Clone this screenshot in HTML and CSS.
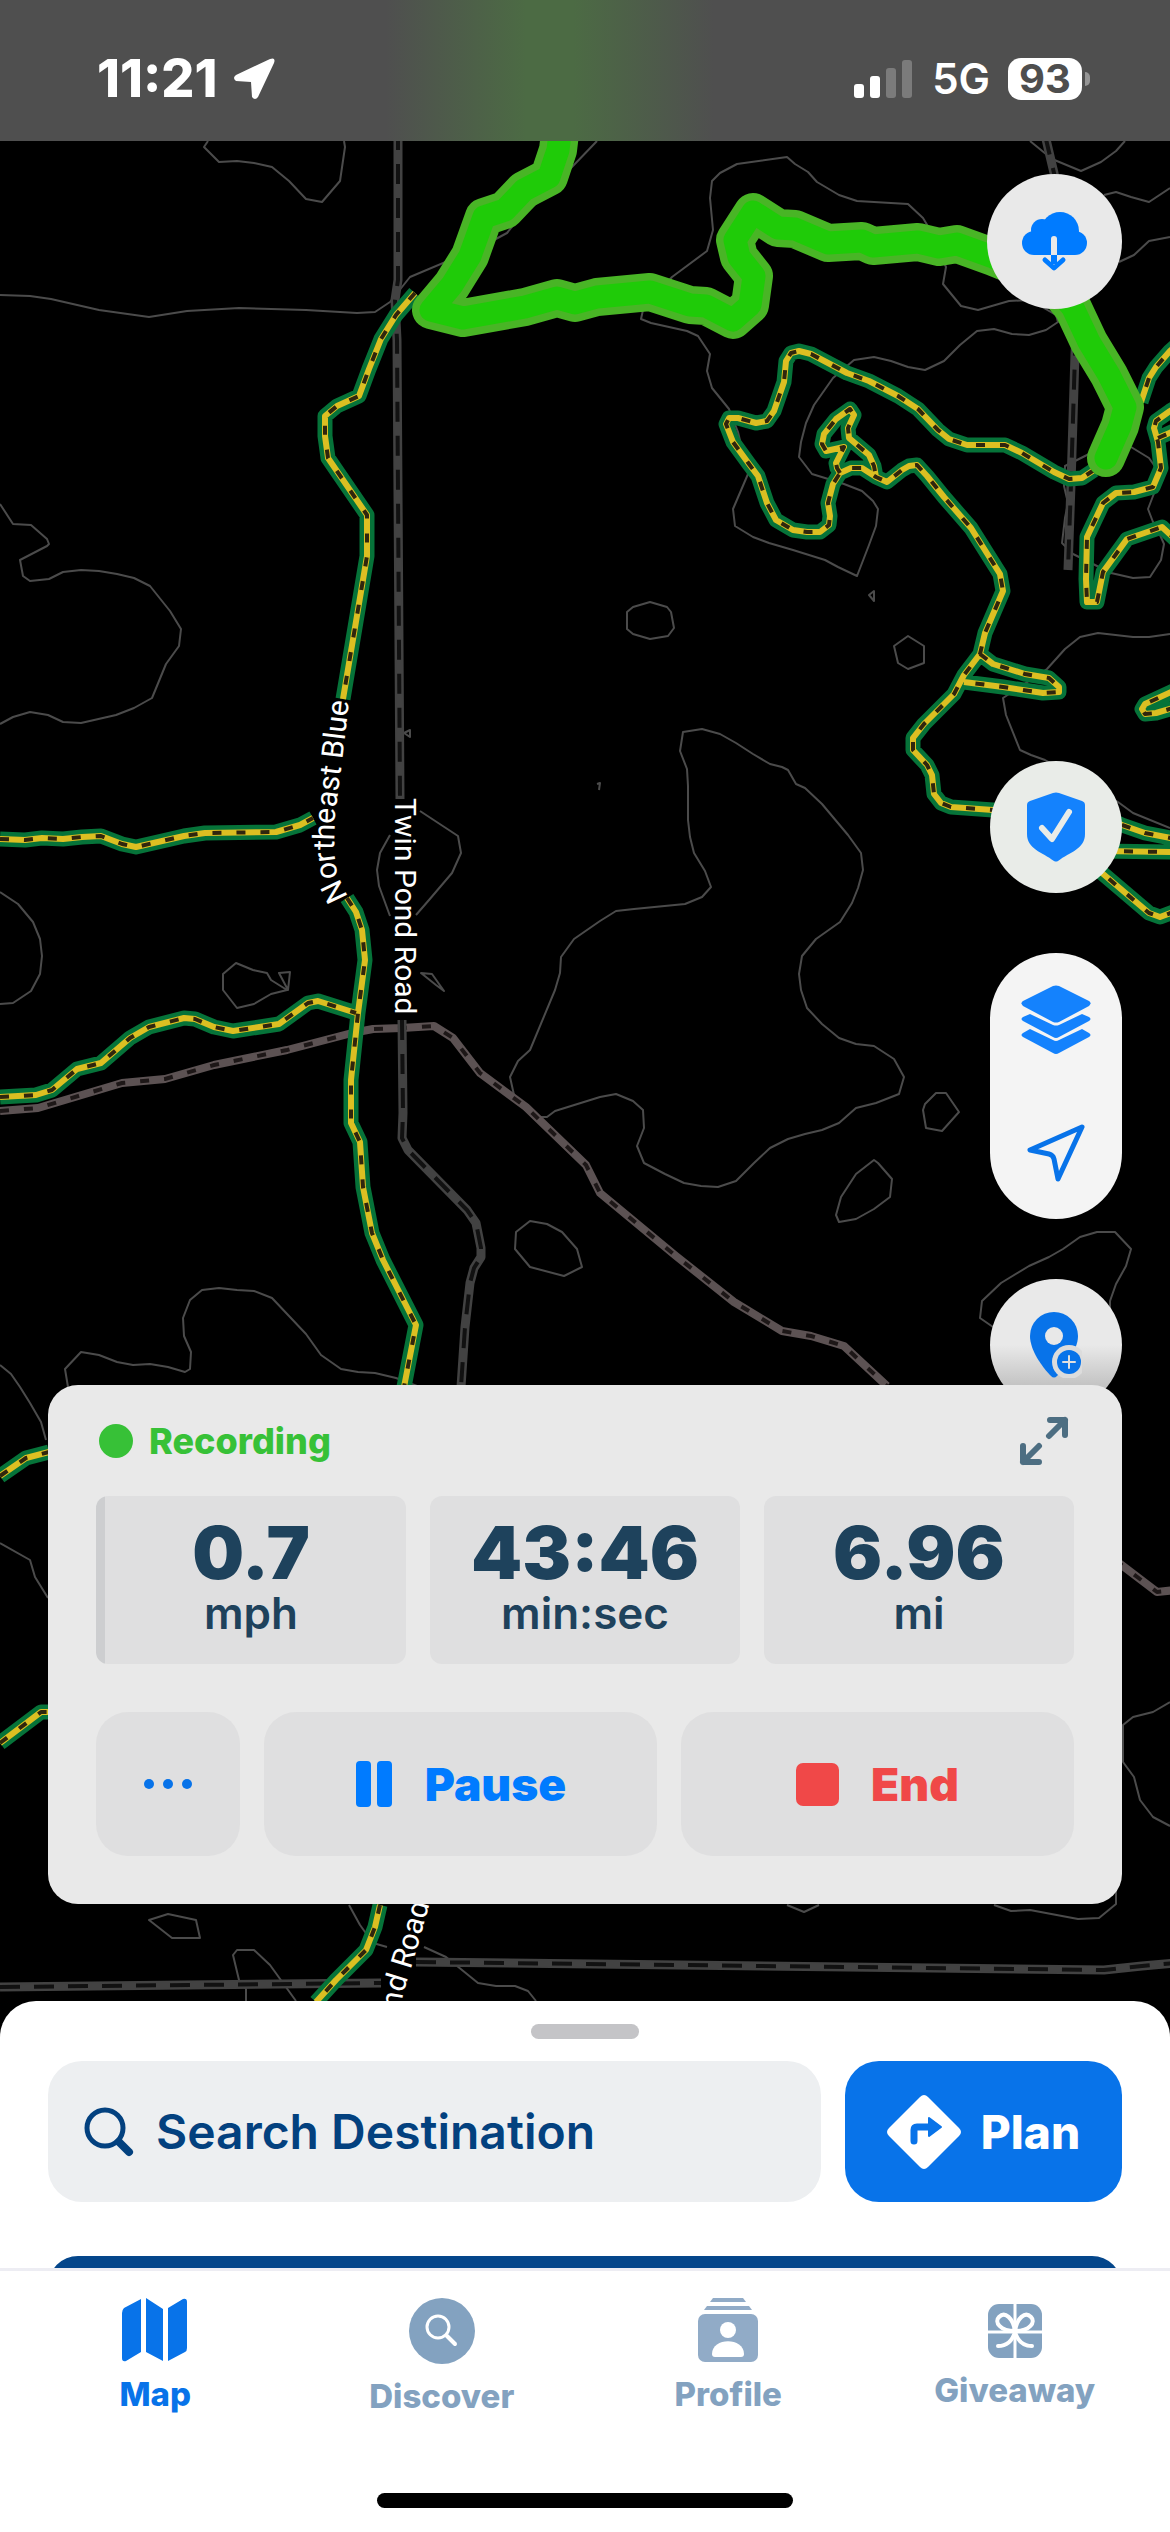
FILE: index.html
```html
<!DOCTYPE html>
<html lang="en">
  <head>
    <meta charset="UTF-8" />
    <meta name="viewport" content="width=device-width, initial-scale=1" />
    <title>Trail Map</title>
    <link rel="stylesheet" href="styles.css">
  </head>
  <body>
    <div class="screen">
      <!-- map canvas -->
      <svg class="map" viewBox="0 0 1170 2532" preserveAspectRatio="xMidYMin slice" aria-hidden="true">
        <defs>
          <path id="trails" d="M415 293L396 315L381 339L369 369L359 396L337 406L325 416V436L328 458L367 515V556L343 699
            M347 898L356 912L362 930L365 960L358 1013L351 1080V1123L360 1142L363 1187L372 1233L383 1260L416 1325L404 1387
            M380 1905L375 1927L366 1950L336 1980L316 2002
            M0 839L25 840L42 838L63 839L82 837L101 836L122 844L136 847L184 836L205 833L276 832L300 825L313 818
            M0 1097L36 1095L52 1090L77 1069L101 1063L130 1038L149 1027L184 1018L195 1019L214 1027L233 1031L279 1024L308 1003L318 1001L356 1013
            M0 1476L26 1458L49 1452
            M0 1743L41 1712H60
            M1094 470L1082 478L1069 479L1054 472L1022 453L1005 445H967L949 439L938 430L918 409L898 396L869 381L847 373L811 354L799 351L791 353L786 361L784 382L774 411L767 421L756 423L738 418H729L726 424L733 442L749 464L758 476L767 503L776 520L793 530L807 532H820L829 525L830 516L828 503L833 484L840 473L851 468H862L876 477L887 482L902 470L909 466L917 465L927 476L944 497L971 528L1000 574L1003 591L985 633L980 654L964 675L954 694L924 724L913 738V750L927 765L932 775L934 794L941 803L951 807L993 810H1020
            M840 473L837 468L836 463L844 447L826 451L822 444L824 434L836 419L850 409L854 415L848 428L849 438L869 455L874 466L876 477
            M980 654L993 664L1025 674L1049 678L1059 687V692L1043 693L1003 687L964 682
            M1180 688L1145 704L1142 709L1145 714L1156 713L1180 706
            M1180 342L1170 351L1156 367L1149 378L1141 402
            M1180 405L1170 411L1156 421L1154 428L1158 442L1161 468L1153 487L1134 492L1116 493L1103 503L1087 537L1086 579L1087 602H1097L1103 572L1127 539L1162 527L1176 540
            M1158 438L1176 430
            M1100 815L1122 825L1145 833L1176 839
            M1100 851L1176 852
            M1090 864L1102 873L1149 913L1160 917L1176 911" />
          <path id="roads" d="M398 130V280L395 300L397 340L400 799
            M402 1020L403 1113L402 1138L408 1150L467 1210L476 1223L481 1248V1257L474 1268L470 1283L465 1327L461 1387
            M1045 135L1054 173L1078 300L1075 354L1071 484L1068 570
            M0 1987L381 1983M416 1962L679 1965L1104 1970L1142 1966L1176 1963" />
          <path id="tracks" d="M0 1111L38 1108L122 1083L165 1079L214 1065L287 1050L352 1033L373 1029L402 1028L434 1026L453 1038L480 1073L526 1107L586 1165L600 1193L676 1256L734 1302L782 1331L811 1336L844 1346L887 1386
            M1115 1560L1157 1592L1176 1590" />
          <path id="recorded" d="M561 125L558 150L549 177L524 190L505 210L484 217L470 256L452 285L431 310L463 318L525 307L557 298L575 303L597 297L650 292L690 305L706 306L733 320L750 305L754 276L739 257L735 240L753 212L778 228L795 229L828 243L862 241L873 246L918 242L939 247L957 244L993 257L1050 280L1073 308L1089 342L1109 375L1125 407L1120 426L1106 458" />
          <path id="label-blue" d="M348 897L337 874L334 850L335 815L341 770L347 720L350 690" />
          <path id="label-pond" d="M391 2044L399 2018L403 1994L418 1945L432 1895L444 1830" />
        </defs>

        <g class="contour">
          <path d="M208 141L204 147L219 162L237 161L254 163L272 167L289 181L306 199L322 202L340 181L345 147L344 141" />
          <path d="M0 295L30 296L51 299L99 310L149 317L187 311L239 308L306 310L357 313L375 312L390 302L410 277L481 247L507 233L520 217L537 203L571 168L597 141" />
          <path d="M787 157L737 164L720 173L712 181L710 198L713 230L707 251L672 277L643 310L641 319L651 323L687 331L698 336L710 354L707 371L712 388L729 409L738 432L748 474L733 509L735 526L753 537L769 543L793 550L825 560L838 567L857 576L869 545L876 526L878 509L873 501L862 491L844 484L825 478L812 474L799 457L801 442L806 423L814 405L833 378L854 360L874 357L891 361L908 367L925 370L944 361L960 345L977 331L994 329L1012 334L1029 335L1046 330L1058 322L1056 315L1030 300L1009 301L978 310L961 306L943 284L946 267L929 228L923 218L908 204L857 201L839 195L817 182L808 172L795 164Z" />
          <path d="M1030 141L1052 159L1081 171L1101 162L1116 151L1125 141" />
          <path d="M1104 195L1116 192L1131 197L1149 202L1170 188M1119 262L1134 255L1149 241L1170 237" />
          <path d="M0 504L13 524L31 525L47 539L49 544L47 546L20 560L23 576L30 581L49 579L63 572L81 570L99 571L117 574L134 578L150 586L170 611L181 629L179 646L166 664L152 698L134 708L116 715L81 723L63 722L48 715L30 712L13 717L0 724" />
          <path d="M0 892L18 904L33 922L40 939L42 956L40 974L31 991L13 1003L0 1004" />
          <path d="M420 811L458 836L461 853L452 873L429 900L416 915M390 835L380 853L377 870L379 886L390 916" />
          <path d="M404 733L410 730V737ZM597 784L600 783L599 790" />
          <path d="M236 963L223 974V990L237 1008L254 1004L271 994L287 990L271 980L267 973L253 970ZM279 973L290 972L288 990ZM421 973L432 974L444 991L436 985Z" />
          <path d="M702 729L683 732L680 751L687 769L688 786V820L690 837L694 853L705 871L711 887L702 897L685 904L634 909L616 911L600 921L574 939L561 957L560 973L555 990L530 1050L518 1061L510 1077L514 1095L540 1117H547L555 1111L600 1097L616 1094L633 1101L643 1110L644 1128L637 1146L644 1163L665 1174L684 1183L701 1186L718 1187L736 1181L754 1163L770 1148L788 1139L805 1134L822 1130L839 1123L856 1108L876 1103L899 1094L904 1077L894 1059L874 1046L856 1044L839 1038L822 1024L807 1008L801 990L799 974L802 956L816 939L840 922L852 903L858 888L863 870L861 853L848 835L822 804L805 788L796 784L788 770L782 767L770 764L753 754L736 743L720 734Z" />
          <path d="M650 602L667 607L671 612L674 628L668 636L650 639L633 634L627 629V612L633 607Z" />
          <path d="M908 636L924 646V663L908 669L898 663L894 646ZM869 595L874 591V601Z" />
          <path d="M936 1093H946L959 1112L942 1131L926 1128L923 1110L925 1104Z" />
          <path d="M874 1160L878 1163L892 1179L890 1197L874 1209L856 1219L839 1222L836 1215L841 1197L856 1174Z" />
          <path d="M993 1327L980 1318L982 1301L1001 1283L1029 1266L1049 1257L1063 1249L1080 1237L1097 1232H1115L1131 1249L1126 1266L1116 1284L1110 1301V1308" />
          <path d="M530 1221L547 1224L562 1232L577 1249L582 1267L564 1276L530 1267L515 1249L516 1232Z" />
          <path d="M68 1387L65 1369L81 1352L99 1355L117 1362L133 1365L150 1364L168 1367L185 1372L190 1369L191 1352L184 1336L183 1318L190 1300L202 1290L219 1288L237 1290L254 1291L272 1298L306 1334L321 1355L341 1369L358 1372L375 1373L396 1378L417 1386" />
          <path d="M0 1365L11 1374L20 1387L30 1403L41 1422L46 1440M0 1543L30 1560L35 1577L48 1598" />
          <path d="M1170 634L1149 637H1133L1098 633L1080 637L1065 649L1047 669L1003 698L1006 715L1020 750L1031 755L1045 760L1118 802L1133 813L1170 828" />
          <path d="M1131 447L1149 458L1161 475L1153 496L1148 509L1153 522L1160 535L1164 544L1161 560L1150 577L1133 578L1111 573L1073 554L1062 543L1065 518L1068 503L1064 486L1065 466L1089 454" />
          <path d="M1170 1702L1153 1712L1133 1717L1123 1725V1762L1134 1777L1140 1800L1153 1817L1170 1826" />
          <path d="M787 1905L804 1912L819 1905M994 1905L1011 1911L1030 1910L1078 1919L1099 1918L1116 1904V1890" />
          <path d="M168 1914L196 1920L200 1938H172L149 1920ZM246 2001V1989L239 1980L233 1955L237 1950H254L270 1965L296 2001" />
          <path d="M349 1905L360 1925L373 1943L387 1947M424 1947L446 1957L478 1983L496 1986H515L528 1991L536 2001" />
        </g>

        <use href="#tracks" class="track" />
        <use href="#tracks" class="dash dash-track" />
        <use href="#roads" class="road" />
        <use href="#roads" class="dash dash-road" />
        <use href="#trails" class="trail-edge" />
        <use href="#trails" class="trail" />
        <use href="#trails" class="dash dash-trail" />
        <use href="#recorded" class="recorded-edge" />
        <use href="#recorded" class="recorded" />

        <text class="road-label"><textPath href="#label-blue">Northeast Blue</textPath></text>
        <text class="road-label" transform="translate(395 798) rotate(90)">Twin Pond Road</text>
        <text class="road-label"><textPath href="#label-pond">Pond Road</textPath></text>
      </svg>

      <header class="status-bar">
        <div class="status-left">
          <span class="clock">11:21</span>
          <svg width="42" height="42" viewBox="0 0 42 42"><path fill="#fff" d="M37 1L3 17Q-1 20 3 23L18 24L19 39Q22 43 25 39L41 5Q43 -1 37 1Z" /></svg>
        </div>
        <div class="status-right">
          <svg width="58" height="38" viewBox="0 0 58 38" fill="#fff">
            <rect y="24" width="10" height="14" rx="3" />
            <rect x="16" y="16" width="10" height="22" rx="3" />
            <rect x="32" y="8" width="10" height="30" rx="3" opacity=".25" />
            <rect x="48" width="10" height="38" rx="3" opacity=".25" />
          </svg>
          <span class="network">5G</span>
          <span class="battery">93</span>
        </div>
      </header>

      <main class="map-ui">
        <div class="controls">
          <button class="fab fab-download" aria-label="Download map">
            <svg width="66" height="60" viewBox="0 0 66 60">
              <g fill="#007bff">
                <circle cx="12" cy="31" r="12" />
                <circle cx="20" cy="18" r="11" />
                <circle cx="38" cy="19" r="19" />
                <circle cx="53" cy="31" r="12" />
                <path d="M12 20H53V43H12Z" />
              </g>
              <path d="M32 27V43" stroke="#e9e9e9" stroke-width="6" stroke-linecap="round" />
              <path d="M29 43H35V52H29Z" fill="#007bff" />
              <path d="M23 48L32 56L41 48" fill="none" stroke="#007bff" stroke-width="5" stroke-linecap="round" stroke-linejoin="round" />
            </svg>
          </button>
          <button class="fab fab-shield" aria-label="Safety">
            <svg width="58" height="70" viewBox="0 0 58 70">
              <path fill="#1482fd" d="M26 1Q29 0 32 1L55 9Q58 10 58 13V42C58 57 43 60 31 69Q29 70 27 69C15 60 0 57 0 42V13Q0 10 3 9Z" />
              <path d="M15 36L25 47L42 20" fill="none" stroke="#e9ece8" stroke-width="6" stroke-linecap="round" stroke-linejoin="round" />
            </svg>
          </button>
          <div class="fab-group">
            <button aria-label="Map layers">
              <svg width="70" height="70" viewBox="0 0 70 70" fill="#1482fd">
                <path d="M32 1Q35 0 38 1L68 16Q71 18 68 21L38 37Q35 38 32 37L2 21Q-1 18 2 16Z" />
                <path d="M9 29L32 40Q35 41 38 40L61 29L68 32Q71 34 68 36L38 52Q35 54 32 52L2 36Q-1 34 2 32Z" />
                <path d="M9 44L32 55Q35 57 38 55L61 44L68 48Q71 50 68 52L38 68Q35 70 32 68L2 52Q-1 50 2 48Z" />
              </svg>
            </button>
            <button aria-label="Center on my location">
              <svg width="58" height="58" viewBox="0 0 58 58">
                <path d="M55 3L3 26L22 30Q26 31 27 35L31 55Z" fill="none" stroke="#0873e9" stroke-width="5" stroke-linejoin="round" />
              </svg>
            </button>
          </div>
          <button class="fab fab-pin" aria-label="Add waypoint">
            <svg width="52" height="66" viewBox="0 0 52 66">
              <path fill="#0873e9" d="M24 0A24 24 0 0 1 48 24C48 38 34 56 27 64Q24 67 21 64C12 55 0 38 0 24A24 24 0 0 1 24 0Z" />
              <circle cx="24" cy="24" r="9" fill="#e8e8e8" />
              <circle cx="39" cy="50" r="17" fill="#dcdcdc" />
              <circle cx="39" cy="50" r="12" fill="#0873e9" />
              <path d="M33 50H45M39 44V56" stroke="#e0e0e0" stroke-width="2" stroke-linecap="round" />
            </svg>
          </button>
        </div>

        <section class="recorder">
          <div class="recorder-head">
            <span class="recording">Recording</span>
            <button class="expand" aria-label="Expand">
              <svg width="50" height="50" viewBox="0 0 50 50" fill="none" stroke="#4d6e82" stroke-width="6" stroke-linecap="round" stroke-linejoin="round">
                <path d="M31 4H46V19M46 4L30 20M4 30V46H20M4 46L20 30" />
              </svg>
            </button>
          </div>
          <div class="stats">
            <div class="stat stat-first"><strong>0.7</strong><span>mph</span></div>
            <div class="stat"><strong>43:46</strong><span>min:sec</span></div>
            <div class="stat"><strong>6.96</strong><span>mi</span></div>
          </div>
          <div class="actions">
            <button class="action more" aria-label="More">
              <svg width="50" height="12" viewBox="0 0 50 12" fill="#0873e9">
                <circle cx="6" cy="6" r="5" /><circle cx="25" cy="6" r="5" /><circle cx="44" cy="6" r="5" />
              </svg>
            </button>
            <button class="action pause">
              <svg width="38" height="46" viewBox="0 0 38 46" fill="currentColor">
                <rect x="1" width="15" height="46" rx="4" /><rect x="22" width="15" height="46" rx="4" />
              </svg>
              Pause
            </button>
            <button class="action end">
              <svg width="43" height="43" viewBox="0 0 43 43" fill="currentColor"><rect width="43" height="43" rx="7" /></svg>
              End
            </button>
          </div>
        </section>
      </main>

      <section class="sheet">
        <div class="handle"></div>
        <div class="search-row">
          <label class="search">
            <svg width="50" height="50" viewBox="0 0 50 50" fill="none" stroke="#03417f" stroke-linecap="round">
              <circle cx="21" cy="21" r="18" stroke-width="5" /><path d="M35 35L45 45" stroke-width="8" />
            </svg>
            <input type="text" placeholder="Search Destination" aria-label="Search Destination" />
          </label>
          <button class="plan">
            <svg width="74" height="74" viewBox="0 0 74 74">
              <path fill="#fff" d="M33 2Q37 -2 41 2L72 33Q76 37 72 41L41 72Q37 76 33 72L2 41Q-2 37 2 33Z" />
              <path d="M27 46V35Q27 32 30 32H42" fill="none" stroke="#0873e9" stroke-width="7" stroke-linecap="round" />
              <path d="M42 23L54 32L42 41Z" fill="#0873e9" stroke="#0873e9" stroke-width="2" stroke-linejoin="round" />
            </svg>
            Plan
          </button>
        </div>
        <div class="promo"></div>
      </section>

      <nav class="tabs">
        <a class="tab active" href="#map">
          <svg width="66" height="64" viewBox="0 0 66 64" fill="currentColor">
            <path d="M19 1V54L4 63Q0 64 0 60V15Q0 12 2 10ZM24 0L41 11V63L24 54ZM46 10L61 1Q65 0 65 4V50Q65 53 63 54L46 63Z" />
          </svg>
          Map
        </a>
        <a class="tab" href="#discover">
          <svg width="66" height="66" viewBox="0 0 66 66">
            <circle cx="33" cy="33" r="33" fill="currentColor" />
            <g fill="none" stroke="#fff" stroke-linecap="round"><circle cx="29" cy="29" r="11" stroke-width="3" /><path d="M38 38L46 46" stroke-width="4" /></g>
          </svg>
          Discover
        </a>
        <a class="tab" href="#profile">
          <svg width="60" height="64" viewBox="0 0 60 64">
            <g fill="#91abc7"><path d="M15 0H45L48 4H12ZM9 8H51L54 12H6Z" /><rect y="16" width="60" height="48" rx="7" /></g>
            <circle cx="30" cy="32" r="8" fill="#fff" />
            <path fill="#fff" d="M14 56C14 39 46 39 46 56Q46 59 43 59H17Q14 59 14 56Z" />
          </svg>
          Profile
        </a>
        <a class="tab tab-gift" href="#giveaway">
          <svg width="54" height="54" viewBox="0 0 54 54">
            <rect width="54" height="54" rx="11" fill="currentColor" />
            <g fill="none" stroke="#fff" stroke-width="4" stroke-linecap="round">
              <path d="M27 0V54M0 28H54" stroke-width="3" />
              <path d="M27 27C12 27 6 18 11 13C17 7 25 14 27 27C29 14 37 7 43 13C48 18 42 27 27 27M27 28C24 38 18 42 10 42M27 28C30 38 36 42 44 42" />
            </g>
          </svg>
          Giveaway
        </a>
      </nav>
      <div class="home-indicator"></div>
    </div>
  </body>
</html>
```
FILE: styles.css
```css
* {
  box-sizing: border-box;
}
body {
  margin: 0;
  background: #000;
  font-family: Inter, "Liberation Sans", sans-serif;
}
button {
  display: flex;
  align-items: center;
  justify-content: center;
  padding: 0;
  border: 0;
  background: none;
  font-family: inherit;
  cursor: pointer;
}
svg {
  flex: none;
  display: block;
}
.screen {
  position: relative;
  display: flex;
  flex-direction: column;
  min-height: 100vh;
  overflow: hidden;
}

/* map */
.map {
  position: absolute;
  top: 0;
  left: 0;
  width: 100%;
  height: 100%;
  fill: none;
  stroke-linejoin: round;
}
.contour {
  stroke: #4b4b4b;
  stroke-width: 2;
}
.road {
  stroke: #424242;
  stroke-width: 9;
}
.track {
  stroke: #5c5253;
  stroke-width: 8;
}
.trail-edge {
  stroke: #067339;
  stroke-width: 15;
}
.trail {
  stroke: #dcbf22;
  stroke-width: 6;
}
.dash {
  stroke: #30260d;
  stroke-width: 4;
  stroke-dasharray: 9 15;
}
.dash-road {
  stroke: #111;
  stroke-dasharray: 20 14;
}
.dash-track {
  stroke: #1d1717;
}
.recorded-edge {
  stroke: #49b526;
  stroke-width: 38;
  stroke-linecap: round;
}
.recorded {
  stroke: #1fcb08;
  stroke-width: 23;
  stroke-linecap: round;
}
.road-label {
  font: 30px Roboto, sans-serif;
  fill: #fff;
  stroke: #000;
  stroke-width: 4;
  paint-order: stroke;
}

/* status bar */
.status-bar {
  position: relative;
  display: flex;
  justify-content: space-between;
  align-items: center;
  height: 141px;
  padding: 16px 88px 0 97px;
  color: #fff;
  background: linear-gradient(90deg, #4f4f4f 33%, #4c6b44 45%, #4c6b44 49%, #4f4f4f 61%);
}
.status-left,
.status-right {
  display: flex;
  align-items: center;
}
.status-left {
  gap: 16px;
}
.clock {
  font-size: 52px;
  font-weight: 800;
}
.network {
  margin: 0 18px 0 20px;
  font-size: 42px;
  font-weight: 600;
}
.battery {
  position: relative;
  width: 74px;
  height: 42px;
  border-radius: 13px;
  background: #fff;
  color: #4e4e4e;
  font-size: 40px;
  font-weight: 700;
  line-height: 42px;
  text-align: center;
}
.battery::after {
  content: "";
  position: absolute;
  top: 14px;
  right: -8px;
  width: 5px;
  height: 14px;
  border-radius: 0 5px 5px 0;
  background: #959595;
}

/* floating controls */
.map-ui {
  position: relative;
  flex: 1;
  padding: 33px 48px 96px;
}
.controls {
  display: flex;
  flex-direction: column;
  align-items: flex-end;
  gap: 60px;
  margin-bottom: -26px;
}
.fab {
  width: 132px;
  height: 132px;
  border-radius: 50%;
  background: #e9e9e9;
}
.fab-download {
  width: 135px;
  height: 135px;
  margin-bottom: 392px;
}
.fab-shield {
  background: #e9ece8;
}
.fab-pin {
  background: linear-gradient(#e9e9e9 50%, #c4c4c4 80%);
}
.fab-group {
  width: 132px;
  border-radius: 66px;
  background: #f4f4f4;
}
.fab-group button {
  width: 100%;
  height: 133px;
}

/* recording card */
.recorder {
  position: relative;
  padding: 31px 48px 48px;
  border-radius: 30px;
  background: #e9e9e9;
}
.recorder-head {
  display: flex;
  align-items: center;
  justify-content: space-between;
  margin-bottom: 30px;
  padding: 0 5px 0 3px;
}
.recording {
  display: flex;
  align-items: center;
  gap: 16px;
  color: #37c137;
  font-size: 36px;
  font-weight: 800;
}
.recording::before {
  content: "";
  width: 34px;
  height: 34px;
  border-radius: 50%;
  background: #37c137;
}
.stats {
  display: grid;
  grid-template-columns: repeat(3, 1fr);
  gap: 24px;
  margin-bottom: 48px;
}
.stat {
  overflow: hidden;
  padding: 20px 0 28px;
  border-radius: 12px;
  background: #dfdfe0;
  color: #1e425c;
  text-align: center;
}
.stat-first {
  background: linear-gradient(90deg, #cdced0 9px, #dfdfe0 9px);
}
.stat strong,
.stat span {
  display: block;
}
.stat strong {
  font-size: 73px;
  font-weight: 900;
  line-height: 74px;
}
.stat span {
  font-size: 44px;
  font-weight: 600;
  line-height: 46px;
}
.actions {
  display: grid;
  grid-template-columns: 144px 1fr 1fr;
  gap: 24px;
}
.action {
  gap: 32px;
  height: 144px;
  border-radius: 32px;
  background: #dfdfe0;
  font-size: 46px;
  font-weight: 900;
}
.pause {
  color: #007bff;
}
.end {
  color: #f04848;
}

/* bottom sheet */
.sheet {
  position: relative;
  padding: 23px 48px 0;
  border-radius: 36px 36px 0 0;
  background: #fff;
}
.handle {
  width: 108px;
  height: 15px;
  margin: 0 auto 22px;
  border-radius: 8px;
  background: #c4c4c7;
}
.search-row {
  display: flex;
  gap: 24px;
  height: 141px;
  margin-bottom: 54px;
}
.search {
  display: flex;
  flex: 1;
  align-items: center;
  gap: 22px;
  padding: 0 36px;
  border-radius: 34px;
  background: #edeff1;
}
.search input {
  width: 100%;
  min-width: 0;
  padding: 0;
  border: 0;
  outline: 0;
  background: none;
  color: #03417f;
  font: 600 48px Inter, sans-serif;
}
.search input::placeholder {
  color: #03417f;
  opacity: 1;
}
.plan {
  gap: 20px;
  width: 277px;
  border-radius: 34px;
  background: #0873e9;
  color: #fff;
  font-size: 46px;
  font-weight: 800;
}
/* the card continues under the tab bar */
.promo {
  height: 60px;
  margin-bottom: -48px;
  border-radius: 36px;
  background: #04468b;
}

/* tab bar */
.tabs {
  position: relative;
  display: grid;
  grid-template-columns: repeat(4, 1fr);
  height: 225px;
  padding: 27px 12px 0;
  border-top: 3px solid #ededf3;
  background: #fff;
}
.tab {
  display: flex;
  flex-direction: column;
  align-items: center;
  gap: 12px;
  color: #83a2c0;
  font-size: 33px;
  font-weight: 800;
  line-height: 40px;
  text-decoration: none;
}
.active {
  color: #0873e9;
}
.tab-gift {
  padding-top: 6px;
}
.home-indicator {
  position: relative;
  display: flex;
  justify-content: center;
  padding-bottom: 24px;
  background: #fff;
}
.home-indicator::before {
  content: "";
  width: 416px;
  height: 15px;
  border-radius: 8px;
  background: #000;
}
```
